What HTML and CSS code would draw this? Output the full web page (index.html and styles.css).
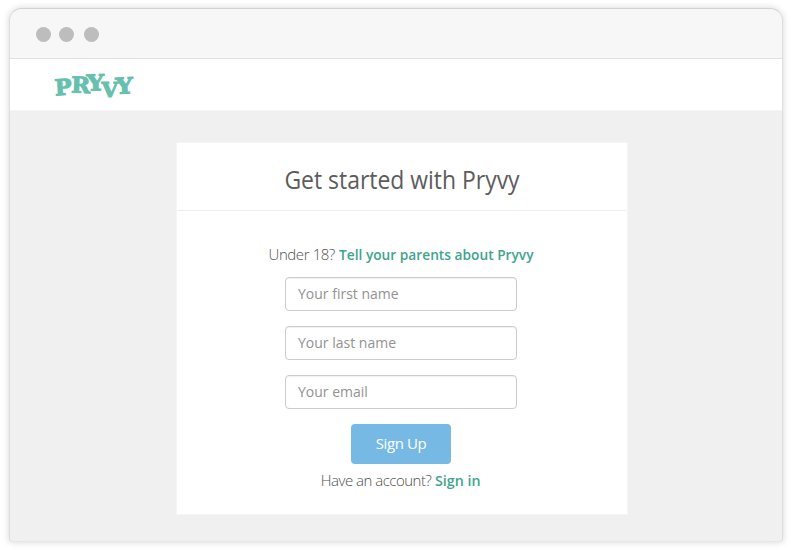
FILE: index.html
```html
<!DOCTYPE html>
<html lang="en">
<head>
<meta charset="utf-8">
<title>Pryvy</title>
<link rel="stylesheet" href="styles.css">
</head>
<body>
<div class="window">
  <div class="titlebar"><span class="dot"></span><span class="dot"></span><span class="dot"></span></div>
  <header class="header">
    <svg class="logo" width="82" height="28" viewBox="53 71 82 28" role="img" aria-label="Pryvy">
      <text transform="translate(55.2 95.5) rotate(-4)" textLength="17" lengthAdjust="spacingAndGlyphs">P</text>
      <text transform="translate(71 92.6) rotate(2)" textLength="19" lengthAdjust="spacingAndGlyphs">R</text>
      <text transform="translate(87 90.8) rotate(-2)" textLength="17.5" lengthAdjust="spacingAndGlyphs">Y</text>
      <text class="small" transform="translate(101.5 96.5)" textLength="16.5" lengthAdjust="spacingAndGlyphs">V</text>
      <text transform="translate(116 93.9) rotate(-3)" textLength="17.5" lengthAdjust="spacingAndGlyphs">Y</text>
    </svg>
  </header>
  <main class="page">
    <section class="card">
      <h1 class="title">Get started with Pryvy</h1>
      <form class="form">
        <p class="note"><span class="under">Under 18?</span> <a class="parents">Tell your parents about Pryvy</a></p>
        <input class="field" type="text" placeholder="Your first name">
        <input class="field" type="text" placeholder="Your last name">
        <input class="field" type="text" placeholder="Your email">
        <button class="button" type="button">Sign Up</button>
        <p class="note account"><span class="have">Have an account?</span> <a class="signin">Sign in</a></p>
      </form>
    </section>
  </main>
</div>
</body>
</html>
```

FILE: styles.css
```css
* { box-sizing: border-box; }
body {
  margin: 0;
  height: 550px;
  padding: 8px 8px 8px 9px;
  overflow: hidden;
  background: #fff;
  font-family: "Open Sans", "Noto Sans", sans-serif;
}
.window {
  display: flex;
  flex-direction: column;
  width: 774px;
  height: 534px;
  border: 1px solid #dedede;
  border-top-color: #d2d2d2;
  border-bottom-color: #e6e6e6;
  border-radius: 13px 13px 3px 3px;
  overflow: hidden;
  background: #f0f0f0;
  box-shadow: 0 0 7px rgba(0, 0, 0, 0.17);
}
.titlebar {
  display: flex;
  align-items: center;
  height: 50px;
  padding: 2px 0 0 26px;
  gap: 8px;
  background: #f7f7f7;
  border-bottom: 1px solid #dfdfdf;
}
.dot { width: 15px; height: 15px; border-radius: 50%; background: #bdbdbd; }
.dot:last-child { margin-left: 2px; }
.header { height: 52px; padding: 12px 0 0 43px; background: #fff; border-bottom: 1px solid #f6f6f6; }
.logo {
  display: block;
  overflow: visible;
  fill: #66c0ad;
  stroke: #66c0ad;
  stroke-width: 1;
  font: bold 22px "DejaVu Serif", serif;
}
.logo .small { font-size: 20px; }
.page { display: flex; justify-content: center; padding: 31px 0 0 12px; }
.card { width: 452px; height: 373px; background: #fff; border: 1px solid #f5f5f5; }
.title {
  height: 68px;
  margin: 0 -20px;
  border-bottom: 1px solid #efefef;
  text-align: center;
  color: #5c5c5c;
  font: 400 25px/72px "Open Sans", sans-serif;
  transform: scaleX(0.917);
}
.form { display: flex; flex-direction: column; align-items: center; padding: 33px 2px 0 0; }
.note {
  display: flex;
  gap: 4px;
  height: 33px;
  margin: 0;
  color: #505050;
  font-size: 15px;
  font-weight: 300;
  line-height: 20px;
  white-space: nowrap;
}
.under { letter-spacing: -0.4px; }
.have { letter-spacing: -0.5px; }
.note a { color: #3fa48d; font-weight: 600; transform-origin: left center; }
.parents { margin-right: -18px; transform: scaleX(0.915); }
.signin { margin-right: -2px; transform: scaleX(0.95); }
.field {
  width: 232px;
  height: 34px;
  margin: 0 0 15px;
  padding: 0 12px 2px;
  border: 1px solid #ccc;
  border-radius: 4px;
  background: #fff;
  font: 400 14px "Open Sans", sans-serif;
  box-shadow: inset 0 1px 1px rgba(0, 0, 0, 0.06);
}
.field::placeholder { color: #929292; opacity: 1; }
.button {
  width: 100px;
  height: 40px;
  padding: 0 0 2px;
  border: 0;
  border-radius: 4px;
  background: #76b9e4;
  color: #fff;
  font: 400 15px "Open Sans", sans-serif;
  letter-spacing: -0.4px;
}
.account { margin-top: 6px; }
```
